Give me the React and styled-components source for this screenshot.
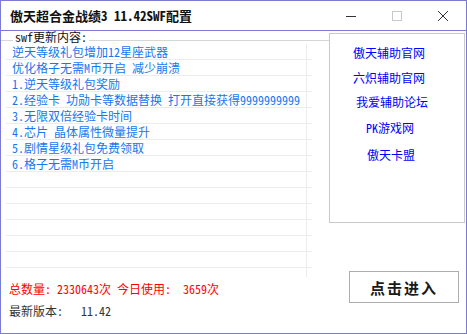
import React from "react";
import styled, { createGlobalStyle } from "styled-components";

const GlobalStyle = createGlobalStyle`
  html, body {
    margin: 0;
    padding: 0;
    background: #fff;
  }
  body {
    font-family: "Noto Sans CJK SC", sans-serif;
    font-feature-settings: "hwid";
  }
`;

const Window = styled.div`
  width: 467px;
  height: 334px;
  box-sizing: border-box;
  border: 1px solid #7b7bd6;
  background: #fff;
  display: flex;
  flex-direction: column;
  overflow: hidden;
`;

const TitleBar = styled.div`
  height: 30px;
  box-sizing: border-box;
  border-bottom: 1px solid #7b7bd6;
  display: flex;
  align-items: center;
`;

const Title = styled.div`
  flex: 1;
  padding-left: 9px;
  font-size: 13px;
  font-weight: 700;
  color: #111;
  white-space: nowrap;
`;

const Controls = styled.div`
  display: flex;
  height: 100%;
`;

const CaptionButton = styled.div`
  width: 46px;
  height: 100%;
  display: flex;
  align-items: center;
  justify-content: center;
  color: ${(p) => (p.$disabled ? "#c8c8c8" : "#333")};
`;

const Body = styled.div`
  flex: 1;
  display: flex;
`;

const LeftPane = styled.div`
  width: 328px;
  display: flex;
  flex-direction: column;
  padding-top: 6px;
`;

const GroupHead = styled.div`
  height: 7px;
  display: flex;
  align-items: center;

  &::before,
  &::after {
    content: "";
    height: 0;
    border-top: 1px solid #d6d6d6;
  }
  &::before {
    width: 12px;
  }
  &::after {
    flex: 1;
  }
`;

const GroupLabel = styled.span`
  align-self: flex-end;
  margin-bottom: 1px;
  padding: 0 2px;
  font-size: 12px;
  line-height: 12px;
  color: #111;
  white-space: nowrap;
`;

const List = styled.div`
  margin-left: 5px;
  width: 306px;
  height: 233px;
  overflow: hidden;
`;

const Row = styled.div`
  display: grid;
  grid-template-columns: 301px 5px;
  height: 16px;
  box-sizing: border-box;
  border-bottom: 1px solid #ececec;
`;

const Cell = styled.div`
  border-right: 1px solid #ececec;
  padding-left: 6px;
  font-size: 12px;
  line-height: 15px;
  color: #1677f0;
  white-space: nowrap;
  overflow: hidden;
`;

const StatLine = styled.div`
  padding-left: 8px;
  margin-top: ${(p) => p.$gap}px;
  font-size: 12px;
  line-height: 12px;
  color: ${(p) => p.$color};
  white-space: pre;
`;

const RightPane = styled.div`
  width: 136px;
  display: flex;
  flex-direction: column;
  padding-top: 2px;
`;

const LinkBox = styled.div`
  height: 190px;
  box-sizing: border-box;
  border: 1px solid #c9c9c9;
  display: flex;
  flex-direction: column;
  align-items: center;
  padding-right: 16px;
`;

const SiteLink = styled.a`
  margin-top: ${(p) => p.$gap}px;
  margin-left: ${(p) => p.$dx || 0}px;
  font-size: 12px;
  line-height: 12px;
  color: #0000ff;
  text-decoration: none;
  white-space: nowrap;
  cursor: pointer;
`;

const EnterButton = styled.button`
  margin-top: 48px;
  margin-left: 20px;
  width: 110px;
  height: 32px;
  box-sizing: border-box;
  border: 1px solid #adadad;
  background: #fff;
  font-family: "Noto Sans CJK SC", sans-serif;
  font-size: 15px;
  font-weight: 700;
  letter-spacing: 2px;
  color: #1a1a1a;
  padding: 0;
  cursor: pointer;
`;

const updates = [
  "逆天等级礼包增加12星座武器",
  "优化格子无需M币开启 减少崩溃",
  "1.逆天等级礼包奖励",
  "2.经验卡 功勋卡等数据替换 打开直接获得9999999999",
  "3.无限双倍经验卡时间",
  "4.芯片 晶体属性微量提升",
  "5.剧情星级礼包免费领取",
  "6.格子无需M币开启",
];

const links = [
  { text: "傲天辅助官网", gap: 13 },
  { text: "六炽辅助官网", gap: 13 },
  { text: "我爱辅助论坛", gap: 12, dx: 6 },
  { text: "PK游戏网", gap: 14, dx: 2 },
  { text: "傲天卡盟", gap: 15, dx: 4 },
];

export default function App() {
  const rows = [...updates];
  while (rows.length < 15) rows.push("");

  return (
    <>
      <GlobalStyle />
      <Window>
        <TitleBar>
          <Title>傲天超合金战绩3 11.42SWF配置</Title>
          <Controls>
            <CaptionButton>
              <svg width="10" height="10" viewBox="0 0 10 10">
                <path d="M0 5.5h10" stroke="currentColor" strokeWidth="1" />
              </svg>
            </CaptionButton>
            <CaptionButton $disabled>
              <svg width="10" height="10" viewBox="0 0 10 10">
                <rect x="0.5" y="0.5" width="9" height="9" fill="none" stroke="currentColor" strokeWidth="1" />
              </svg>
            </CaptionButton>
            <CaptionButton>
              <svg width="10" height="10" viewBox="0 0 10 10">
                <path d="M0 0L10 10M10 0L0 10" stroke="currentColor" strokeWidth="1" />
              </svg>
            </CaptionButton>
          </Controls>
        </TitleBar>

        <Body>
          <LeftPane>
            <GroupHead>
              <GroupLabel>swf更新内容:</GroupLabel>
            </GroupHead>
            <List>
              {rows.map((text, i) => (
                <Row key={i}>
                  <Cell>{text}</Cell>
                  <div />
                </Row>
              ))}
            </List>
            <StatLine $gap={6} $color="#ff0000">
              总数量: 2330643次 今日使用:  3659次
            </StatLine>
            <StatLine $gap={10} $color="#333">
              最新版本:   11.42
            </StatLine>
          </LeftPane>

          <RightPane>
            <LinkBox>
              {links.map((l) => (
                <SiteLink key={l.text} $gap={l.gap} $dx={l.dx}>
                  {l.text}
                </SiteLink>
              ))}
            </LinkBox>
            <EnterButton>点击进入</EnterButton>
          </RightPane>
        </Body>
      </Window>
    </>
  );
}
